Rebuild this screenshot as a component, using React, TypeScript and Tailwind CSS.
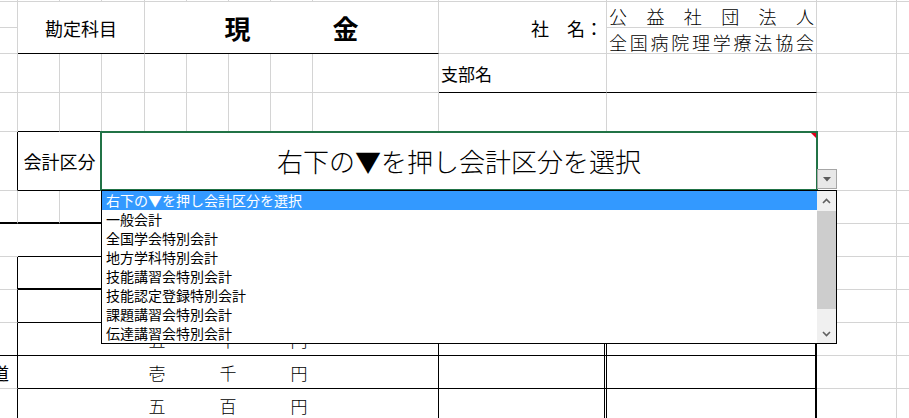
import type { ReactNode } from 'react';

const colStart = [
  'col-start-1', 'col-start-2', 'col-start-3', 'col-start-4', 'col-start-5', 'col-start-6', 'col-start-7',
  'col-start-8', 'col-start-9', 'col-start-10', 'col-start-11', 'col-start-12', 'col-start-13',
];
const sideRows = [
  'row-start-4', 'row-start-5', 'row-start-6', 'row-start-7', 'row-start-8',
  'row-start-9', 'row-start-10', 'row-start-11', 'row-start-12', 'row-start-13',
];

const options = [
  '右下の▼を押し会計区分を選択',
  '一般会計',
  '全国学会特別会計',
  '地方学科特別会計',
  '技能講習会特別会計',
  '技能認定登録特別会計',
  '課題講習会特別会計',
  '伝達講習会特別会計',
];

const amountRows = [
  { row: 'row-start-11', chars: ['五', '千', '円'], left: 'border-b-black', note: '' },
  { row: 'row-start-12', chars: ['壱', '千', '円'], left: '', note: '道' },
  { row: 'row-start-13', chars: ['五', '百', '円'], left: '', note: '' },
];

function Cell({ className = '', children }: { className?: string; children?: ReactNode }) {
  return <div className={`border-r border-b border-[#d4d4d4] ${className}`}>{children}</div>;
}

function Chevron({ up }: { up?: boolean }) {
  return (
    <svg width="9" height="6" viewBox="0 0 9 6">
      <path
        d={up ? 'M1 5 L4.5 1.5 L8 5' : 'M1 1 L4.5 4.5 L8 1'}
        stroke="#606060"
        strokeWidth="1.6"
        fill="none"
      />
    </svg>
  );
}

export default function App() {
  return (
    <div className="relative w-[909px] h-[418px] overflow-hidden bg-white text-black font-['Noto_Sans_CJK_JP',sans-serif]">
      <div className="grid grid-cols-[18px_42px_42px_43px_42px_42px_42px_42px_126px_168px_210px_80px_40px] grid-rows-[2px_26px_26px_39px_39px_59px_33px_33px_33px_33px_33px_33px_33px]">
        {/* hidden top row */}
        {colStart.map((c) => (
          <Cell key={c} className={`${c} row-start-1`} />
        ))}

        {/* header: 勘定科目 / 現金 / 社名 */}
        <Cell className="col-start-1 row-start-2" />
        <Cell className="col-start-1 row-start-3" />
        <Cell className="col-start-2 col-span-3 row-start-2 row-span-2 border-b-black flex items-center justify-center text-[18px] leading-none">
          勘定科目
        </Cell>
        <Cell className="col-start-5 col-span-5 row-start-2 row-span-2 border-b-black flex items-center justify-center gap-[82px] text-[26px] font-bold leading-none">
          <span>現</span>
          <span>金</span>
        </Cell>
        <Cell className="col-start-10 row-start-2 row-span-2 flex items-center justify-end pr-[3px] text-[18px] leading-none">
          社　名：
        </Cell>
        <Cell className="col-start-11 row-start-2 flex items-end justify-between px-[2px] pb-[2px] text-[18px] font-light leading-none">
          {['公', '益', '社', '団', '法', '人'].map((ch) => (
            <span key={ch}>{ch}</span>
          ))}
        </Cell>
        <Cell className="col-start-11 row-start-3 flex items-end justify-between px-[2px] pb-[2px] text-[18px] font-light leading-none">
          {['全', '国', '病', '院', '理', '学', '療', '法', '協', '会'].map((ch) => (
            <span key={ch}>{ch}</span>
          ))}
        </Cell>
        <Cell className="col-start-12 row-start-2 row-span-2" />
        <Cell className="col-start-13 row-start-2 row-span-2" />

        {/* 支部名 */}
        {colStart.slice(0, 9).map((c) => (
          <Cell key={c} className={`${c} row-start-4`} />
        ))}
        <Cell className="col-start-10 row-start-4 border-b-black flex items-center pl-[2px] text-[17px] leading-none">
          支部名
        </Cell>
        <Cell className="col-start-11 row-start-4 border-b-black" />

        {/* spacer row */}
        <Cell className="col-start-1 row-start-5" />
        <Cell className="col-start-2 row-start-5 border-b-black" />
        <Cell className="col-start-3 row-start-5 border-b-black" />
        {colStart.slice(3, 11).map((c) => (
          <Cell key={c} className={`${c} row-start-5`} />
        ))}

        {/* 会計区分 */}
        <Cell className="col-start-1 row-start-6 border-r-black" />
        <Cell className="col-start-2 col-span-2 row-start-6 border-r-black border-b-black flex items-center justify-center text-[18px] leading-none">
          会計区分
        </Cell>
        <Cell className="col-start-4 col-span-8 row-start-6 flex items-center justify-center text-[26px] font-light leading-none">
          右下の▼を押し会計区分を選択
        </Cell>

        <Cell className="col-start-1 row-start-7 border-b-2 border-b-black" />
        <Cell className="col-start-2 row-start-7 border-b-2 border-b-black" />
        <Cell className="col-start-3 row-start-7 border-b-2 border-b-black" />
        <Cell className="col-start-4 col-span-8 row-start-7 border-b-2 border-b-black" />

        <Cell className="col-start-1 row-start-8 border-r-0" />
        <Cell className="col-start-2 col-span-10 row-start-8 border-b-black" />

        <Cell className="col-start-1 row-start-9 border-r-black" />
        <Cell className="col-start-2 col-span-10 row-start-9 border-b-2 border-b-black" />

        <Cell className="col-start-1 row-start-10 border-r-black" />
        <Cell className="col-start-2 col-span-10 row-start-10 border-b-black" />

        {/* amounts */}
        {amountRows.map((r) => (
          <div key={r.row} className="contents">
            <Cell className={`col-start-1 ${r.row} border-r-black ${r.left} flex items-center justify-end overflow-hidden text-[17px] leading-none`}>
              {r.note && <span className="shrink-0 mr-[8px]">{r.note}</span>}
            </Cell>
            <Cell className={`col-start-2 col-span-8 ${r.row} border-r-black border-b-black flex items-center justify-center gap-[54px] text-[17px] font-light leading-none`}>
              {r.chars.map((ch) => (
                <span key={ch}>{ch}</span>
              ))}
            </Cell>
            <Cell className={`col-start-10 ${r.row} border-r-[3px] border-double border-r-black border-b-black`} />
            <Cell className={`col-start-11 ${r.row} border-r-2 border-r-black border-b-black`} />
          </div>
        ))}

        {/* right margin columns */}
        {sideRows.map((r) => (
          <div key={r} className="contents">
            <Cell className={`col-start-12 ${r}`} />
            <Cell className={`col-start-13 ${r}`} />
          </div>
        ))}
      </div>

      {/* active cell selection */}
      <div className="absolute left-[100px] top-[131px] w-[718px] h-[60px] border-2 border-[#217346]">
        <div className="absolute right-0 top-0 border-t-[5px] border-l-[5px] border-t-[#e0001a] border-l-transparent" />
      </div>

      {/* validation dropdown button */}
      <div className="absolute left-[817px] top-[169px] w-[20px] h-[20px] border border-[#a6a6a6] bg-[#e8e8e8] flex items-center justify-center">
        <svg width="8" height="5" viewBox="0 0 8 5">
          <path d="M0 0H8L4 4.5Z" fill="#5b5b5b" />
        </svg>
      </div>

      {/* dropdown list */}
      <div className="absolute left-[101px] top-[190px] w-[736px] h-[154px] border border-black bg-white flex text-[14px] leading-[19px]">
        <div className="flex-1">
          {options.map((t, i) => (
            <div
              key={t}
              className={`h-[19px] pl-[4px] whitespace-nowrap ${i === 0 ? 'bg-[#3399ff] text-white' : ''}`}
            >
              {t}
            </div>
          ))}
        </div>
        <div className="w-[19px] flex flex-col bg-[#f0f0f0]">
          <div className="h-[20px] flex items-center justify-center">
            <Chevron up />
          </div>
          <div className="h-[98px] bg-[#cdcdcd]" />
          <div className="flex-1" />
          <div className="h-[19px] flex items-center justify-center">
            <Chevron />
          </div>
        </div>
      </div>
    </div>
  );
}
